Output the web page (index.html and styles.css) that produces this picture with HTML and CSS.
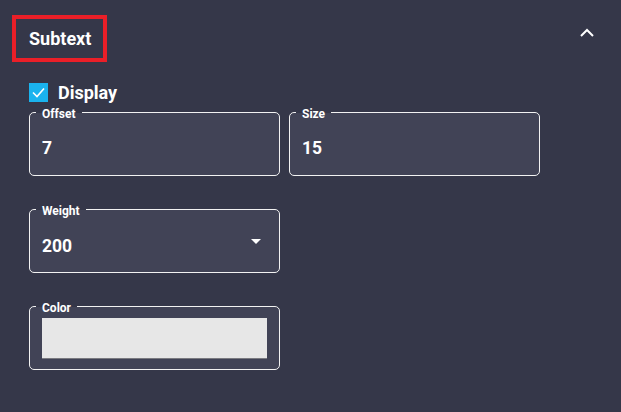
FILE: index.html
```html
<!DOCTYPE html>
<html lang="en">
<head>
<meta charset="utf-8">
<title>Subtext</title>
<link rel="stylesheet" href="styles.css">
</head>
<body>
<section class="panel">
  <header class="panel-header">
    <h2 class="panel-title">Subtext</h2>
    <svg class="collapse-icon" width="14" height="9" viewBox="0 0 14 9" aria-hidden="true"><polyline points="1,8 7,2 13,8" fill="none" stroke="#ffffff" stroke-width="2"/></svg>
  </header>
  <div class="panel-body">
    <label class="check-row">
      <span class="checkbox"><svg width="19" height="19" viewBox="0 0 19 19" aria-hidden="true"><polyline points="4,9.5 8,13.5 15,5.5" fill="none" stroke="#ffffff" stroke-width="1.6"/></svg></span>
      <span class="check-label">Display</span>
    </label>
    <div class="fields">
      <div class="field">
        <span class="field-label">Offset</span>
        <div class="field-value">7</div>
      </div>
      <div class="field">
        <span class="field-label">Size</span>
        <div class="field-value">15</div>
      </div>
      <div class="field field-select">
        <span class="field-label">Weight</span>
        <div class="select-row">
          <div class="field-value">200</div>
          <svg class="select-arrow" width="10" height="5" viewBox="0 0 10 5" aria-hidden="true"><path d="M0 0l5 5 5-5z" fill="#ffffff"/></svg>
        </div>
      </div>
      <div class="field field-color field-first">
        <span class="field-label">Color</span>
        <div class="swatch"></div>
      </div>
    </div>
  </div>
</section>
</body>
</html>
```
FILE: styles.css
```css
:root {
  --page: #353749;
  --field: #414356;
  --text: #ffffff;
}
html, body {
  margin: 0;
  padding: 0;
}
body {
  background: var(--page);
  color: var(--text);
  font-family: Roboto, "Liberation Sans", sans-serif;
  width: 621px;
  height: 412px;
  overflow: hidden;
}
.panel-header {
  display: flex;
  justify-content: space-between;
  align-items: flex-start;
  padding: 15px 27px 0 12px;
}
.panel-title {
  margin: 0;
  box-sizing: border-box;
  height: 47px;
  display: flex;
  align-items: center;
  padding: 0 12px 0 13px;
  border: 4px solid #ea1f28;
  font-size: 18px;
  font-weight: 700;
  line-height: 21px;
}
.collapse-icon {
  display: block;
  margin-top: 13px;
}
.panel-body {
  padding: 21px 0 0 29px;
}
.check-row {
  display: flex;
  align-items: center;
  gap: 10px;
  height: 19px;
}
.checkbox {
  width: 19px;
  height: 19px;
  background: #1ab3ee;
  display: block;
}
.checkbox svg {
  display: block;
}
.check-label {
  font-size: 18px;
  font-weight: 700;
  line-height: 21px;
}
.fields {
  display: grid;
  grid-template-columns: 251px 251px;
  column-gap: 9px;
  row-gap: 33px;
  margin-top: 10px;
}
.field {
  position: relative;
  box-sizing: border-box;
  height: 64px;
  border: 1px solid #f2f2f2;
  border-radius: 5px;
  background: var(--field);
  padding: 25px 12px 0 12px;
}
.field-label {
  position: absolute;
  top: -6px;
  left: 6px;
  padding: 0 6px;
  font-size: 12px;
  font-weight: 700;
  line-height: 14px;
  background: linear-gradient(to bottom, var(--page) 6px, var(--field) 6px);
}
.field-value {
  font-size: 17.5px;
  font-weight: 700;
  line-height: 20px;
}
.field-select {
  grid-column: 1;
  padding-top: 26px;
}
.select-row {
  display: flex;
  justify-content: space-between;
  align-items: flex-start;
}
.select-arrow {
  display: block;
  margin-top: 3px;
  margin-right: 6px;
}
.field-color {
  padding: 11px 12px 0 12px;
}
.field-first {
  grid-column: 1;
}
.swatch {
  height: 40px;
  background: #e7e7e7;
  border-bottom: 1px solid #7a7a80;
}
```
